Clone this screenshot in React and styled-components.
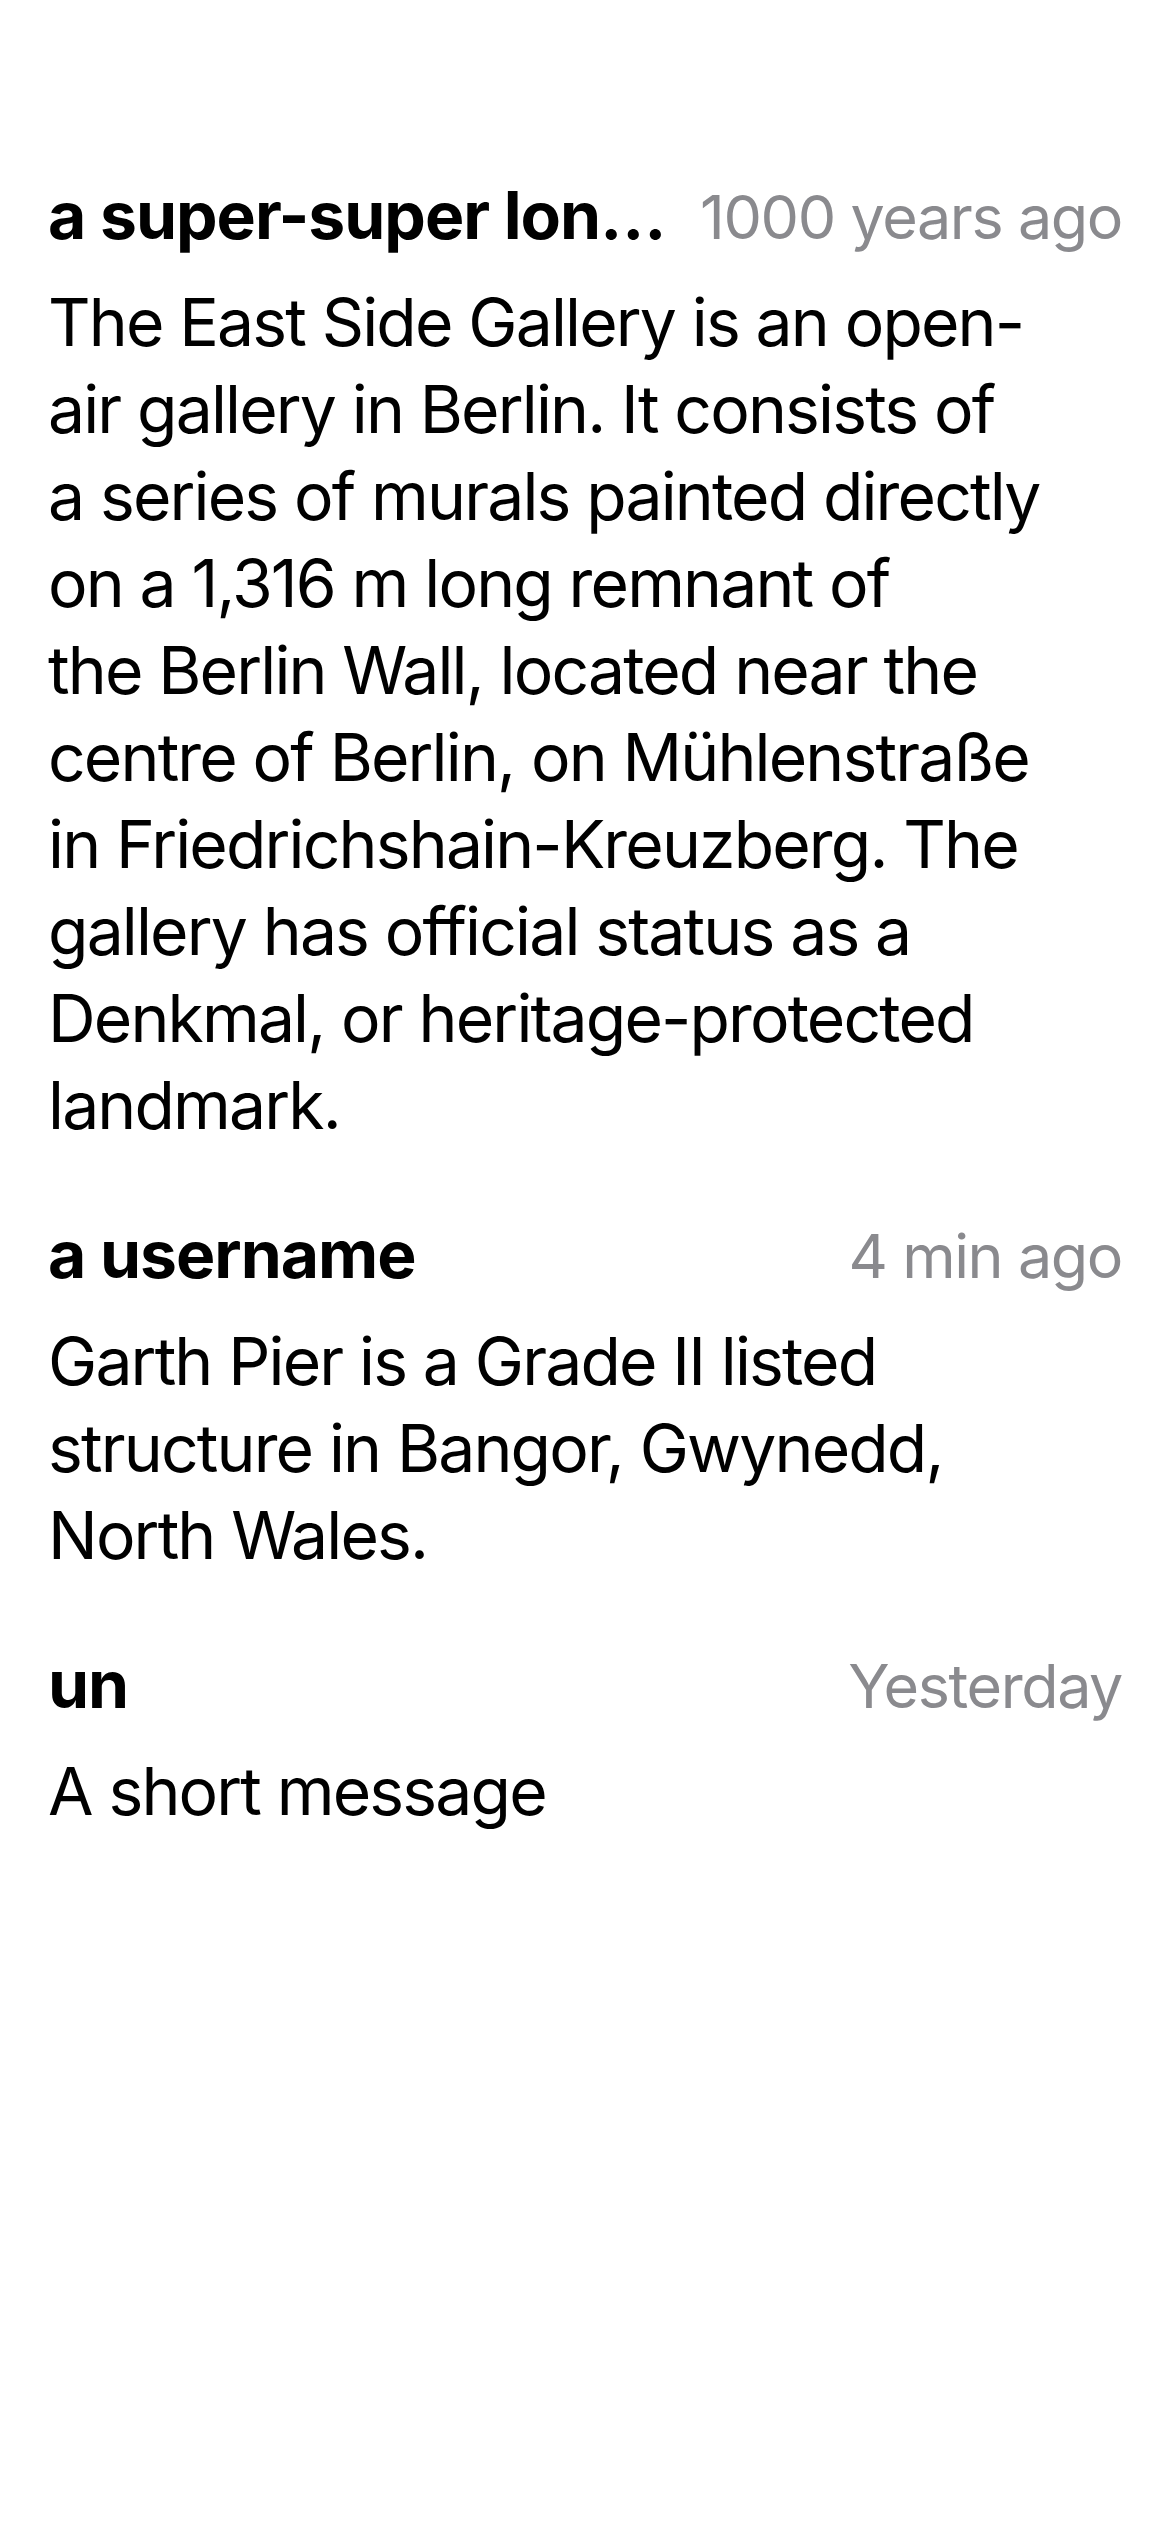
import React from "react";
import styled, { createGlobalStyle } from "styled-components";

const GlobalStyle = createGlobalStyle`
  html, body {
    margin: 0;
    padding: 0;
    background: #ffffff;
  }
  body {
    font-family: Inter, "Noto Sans", "Liberation Sans", sans-serif;
    -webkit-font-smoothing: antialiased;
  }
`;

const Page = styled.main`
  width: 1170px;
  min-height: 2532px;
  box-sizing: border-box;
  padding: 172px 48px 0;
  display: flex;
  flex-direction: column;
  gap: 62px;
  background: #ffffff;
`;

const Entry = styled.article`
  display: flex;
  flex-direction: column;
  gap: 18px;
`;

const Header = styled.header`
  display: flex;
  align-items: baseline;
  gap: 22px;
  line-height: 87px;
`;

const Name = styled.span`
  flex: 1 1 auto;
  min-width: 0;
  font-size: 66px;
  font-weight: 650;
  color: #000000;
  white-space: nowrap;
  overflow: hidden;
  text-overflow: ellipsis;
  letter-spacing: -1px;
`;

const Time = styled.span`
  flex: 0 0 auto;
  font-size: 61px;
  font-weight: 400;
  color: #8a8a8e;
  white-space: nowrap;
  letter-spacing: -1.4px;
`;

const Body = styled.p`
  margin: 0;
  font-size: 66px;
  line-height: 87px;
  font-weight: 400;
  color: #000000;
  letter-spacing: -1.85px;
`;

const Line = styled.span`
  display: block;
  white-space: nowrap;
`;

const messages = [
  {
    name: "a super-super long username",
    time: "1000 years ago",
    lines: [
      "The East Side Gallery is an open-",
      "air gallery in Berlin. It consists of",
      "a series of murals painted directly",
      "on a 1,316 m long remnant of",
      "the Berlin Wall, located near the",
      "centre of Berlin, on Mühlenstraße",
      "in Friedrichshain-Kreuzberg. The",
      "gallery has official status as a",
      "Denkmal, or heritage-protected",
      "landmark.",
    ],
  },
  {
    name: "a username",
    time: "4 min ago",
    lines: [
      "Garth Pier is a Grade II listed",
      "structure in Bangor, Gwynedd,",
      "North Wales.",
    ],
  },
  {
    name: "un",
    time: "Yesterday",
    lines: ["A short message"],
  },
];

export default function App() {
  return (
    <>
      <GlobalStyle />
      <Page>
        {messages.map((m) => (
          <Entry key={m.name}>
            <Header>
              <Name>{m.name}</Name>
              <Time>{m.time}</Time>
            </Header>
            <Body>
              {m.lines.map((l, i) => (
                <Line key={i}>{l}</Line>
              ))}
            </Body>
          </Entry>
        ))}
      </Page>
    </>
  );
}
